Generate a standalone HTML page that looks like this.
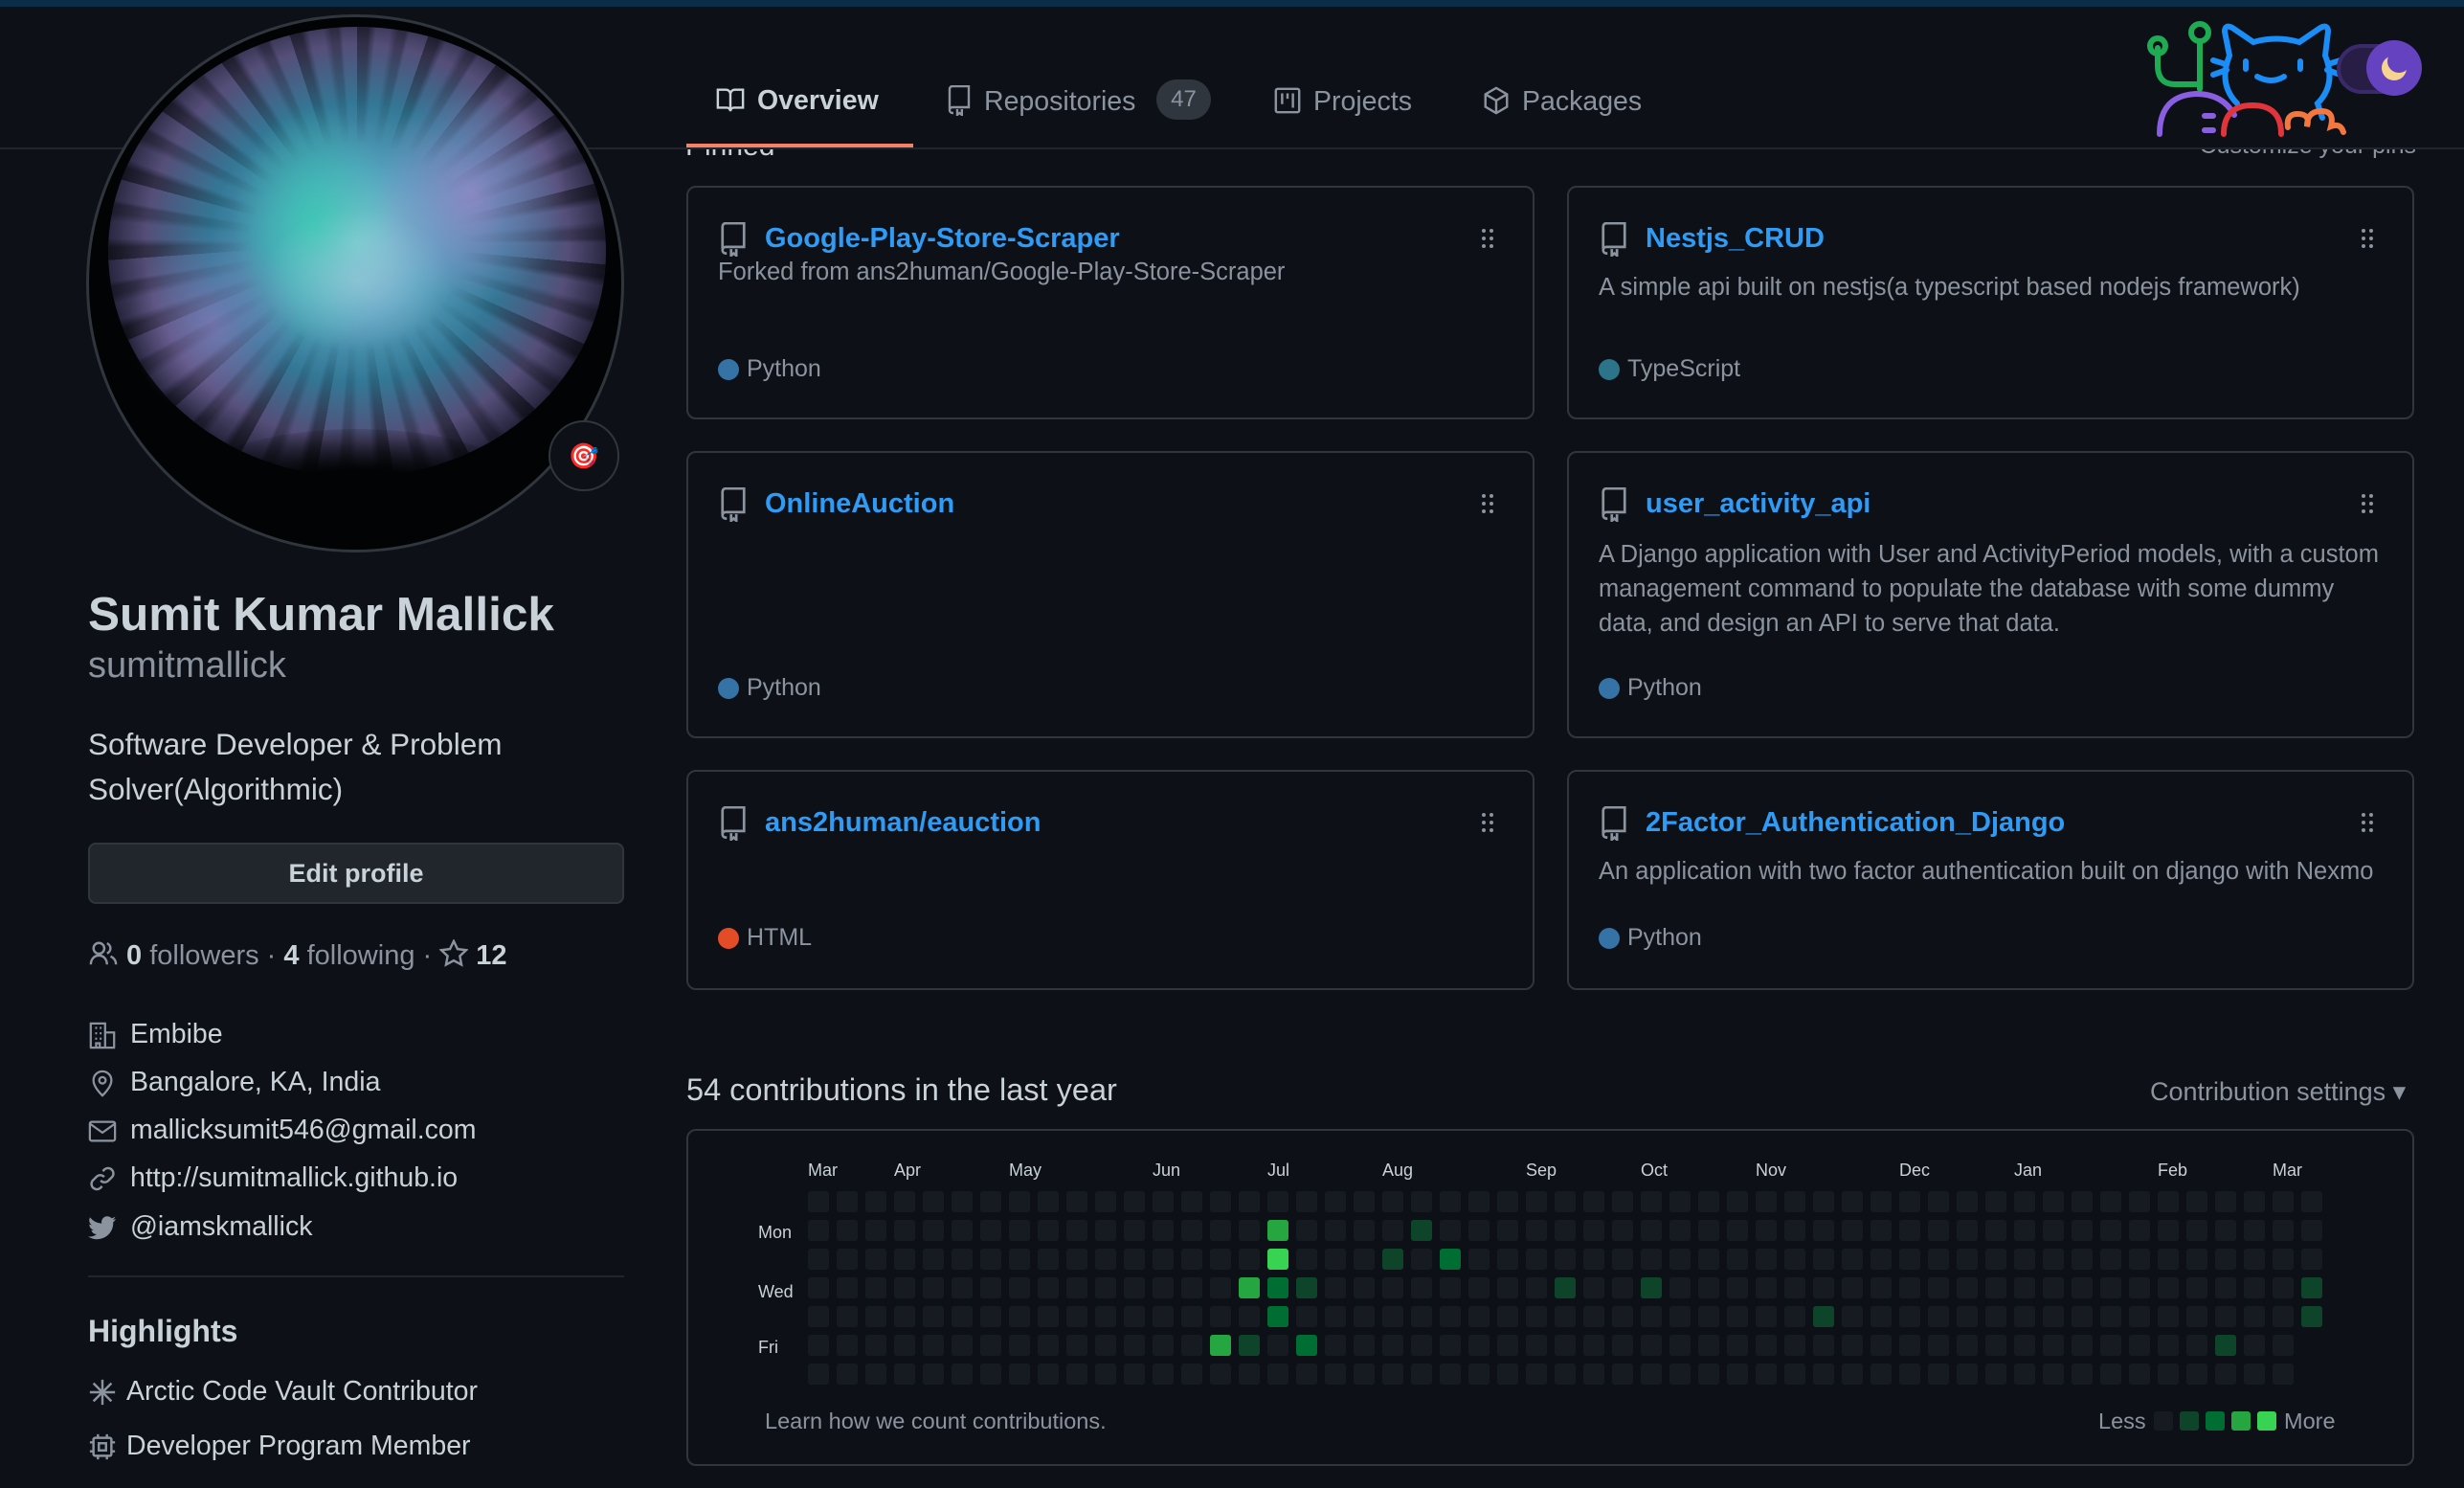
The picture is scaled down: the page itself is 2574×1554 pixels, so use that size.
<!DOCTYPE html>
<html><head><meta charset="utf-8"><style>
*{margin:0;padding:0;box-sizing:border-box}
body{width:2574px;height:1554px;background:#0d1117;font-family:"Liberation Sans",sans-serif;color:#c9d1d9;position:relative;overflow:hidden}
.a{position:absolute;white-space:nowrap}
.card{position:absolute;border:2px solid #30363d;border-radius:10px;background:#0d1117}
.ttl{position:absolute;left:80px;top:37px;font-size:29px;font-weight:bold;color:#2f9bf5}
.ric{position:absolute;left:34px;top:36px}
.dots{position:absolute;right:40px;top:42px}
.desc{position:absolute;left:31px;font-size:25.5px;color:#8b949e;line-height:36px}
.lang{position:absolute;left:31px;font-size:25px;color:#8b949e}
.lang i{display:inline-block;width:22px;height:22px;border-radius:50%;vertical-align:-4px;margin-right:8px}
.tab{position:absolute;top:89px;font-size:28.5px;color:#c9d1d9}
.li{position:absolute;left:92px;font-size:28.5px;color:#c9d1d9}
.li svg{position:absolute;left:0;top:2px}
.li span{position:absolute;left:44px;white-space:nowrap}
.ml{position:absolute;top:1212px;font-size:18px;color:#c9d1d9}
</style></head><body>
<div class="a" style="left:0;top:0;width:2574px;height:7px;background:#0c2d4a"></div>
<div class="a" style="left:0;top:154px;width:2574px;height:2px;background:#21262d"></div>

<div class="a" style="left:716px;top:156px;width:400px;height:16px;overflow:hidden"><div style="position:absolute;top:-20px;font-size:30px;color:#c9d1d9">Pinned</div></div>
<div class="a" style="left:2270px;top:156px;width:254px;height:16px;overflow:hidden"><div style="position:absolute;right:0;top:-18px;font-size:25px;color:#8b949e">Customize your pins</div></div>

<!-- avatar -->
<div class="a" style="left:90px;top:15px;width:562px;height:562px;border-radius:50%;border:3px solid #30363d;overflow:hidden;background:#020304">
<div style="position:absolute;left:20px;top:10px;width:520px;height:470px;border-radius:50%;background:radial-gradient(ellipse at 50% 48%,rgba(140,200,215,1) 0%,rgba(90,170,200,0.95) 22%,rgba(60,140,175,0.85) 42%,rgba(120,110,170,0.7) 60%,rgba(60,60,110,0.35) 75%,rgba(0,0,0,0) 88%)"></div>
<div style="position:absolute;left:20px;top:10px;width:520px;height:470px;border-radius:50%;background:repeating-conic-gradient(from 0deg at 50% 48%,rgba(2,3,4,0.55) 0deg 3deg,rgba(0,0,0,0) 5deg 9deg,rgba(2,3,4,0.35) 11deg 13deg,rgba(0,0,0,0) 14deg 19deg);-webkit-mask:radial-gradient(ellipse at 50% 48%,rgba(0,0,0,0) 30%,#000 70%);mask:radial-gradient(ellipse at 50% 48%,rgba(0,0,0,0) 30%,#000 70%)"></div>
<div style="position:absolute;left:150px;top:90px;width:170px;height:260px;border-radius:50%;background:radial-gradient(ellipse,rgba(40,210,170,0.65),rgba(0,0,0,0) 70%)"></div>
<div style="position:absolute;left:300px;top:70px;width:200px;height:230px;border-radius:50%;background:radial-gradient(ellipse,rgba(170,140,210,0.7),rgba(0,0,0,0) 70%)"></div>
<div style="position:absolute;left:40px;top:220px;width:180px;height:200px;border-radius:50%;background:radial-gradient(ellipse,rgba(150,130,200,0.6),rgba(0,0,0,0) 70%)"></div>
<div style="position:absolute;left:180px;top:200px;width:200px;height:150px;border-radius:50%;background:radial-gradient(ellipse,rgba(170,200,225,0.55),rgba(0,0,0,0) 70%)"></div>
<div style="position:absolute;left:60px;top:430px;width:440px;height:200px;border-radius:50%;background:radial-gradient(ellipse,#020304 40%,rgba(2,3,4,0) 75%)"></div>
</div>
<div class="a" style="left:573px;top:439px;width:74px;height:74px;border-radius:50%;background:#0d1117;border:2px solid #30363d;text-align:center;line-height:70px;font-size:26px">🎯</div>

<div class="a" style="left:92px;top:613px;font-size:49.5px;font-weight:bold;color:#c9d1d9">Sumit Kumar Mallick</div>
<div class="a" style="left:92px;top:674px;font-size:38px;color:#8b949e">sumitmallick</div>
<div class="a" style="left:92px;top:754px;font-size:31.5px;color:#c9d1d9;line-height:47px;white-space:normal;width:560px">Software Developer &amp; Problem Solver(Algorithmic)</div>
<div class="a" style="left:92px;top:880px;width:560px;height:64px;border:2px solid #30363d;border-radius:8px;background:#21262d;text-align:center;line-height:60px;font-size:27px;font-weight:bold;color:#c9d1d9">Edit profile</div>

<div class="a" style="left:92px;top:981px;font-size:29px;color:#8b949e">
<svg width="32" height="30" viewBox="0 0 16 16" style="vertical-align:-4px;margin-right:8px" fill="none" stroke="#8b949e" stroke-width="1.3"><circle cx="5.5" cy="5" r="3"/><path d="M1 14c0-3 2-5 4.5-5S10 11 10 14"/><path d="M10 2.2a3 3 0 010 5.6M12 9.5c1.8.8 3 2.3 3 4.5"/></svg><b style="color:#c9d1d9">0</b> followers · <b style="color:#c9d1d9">4</b> following · <svg width="30" height="30" viewBox="0 0 16 16" style="vertical-align:-4px" fill="none" stroke="#8b949e" stroke-width="1.3"><path d="M8 1l2.1 4.4 4.8.6-3.5 3.3.9 4.8L8 11.8 3.7 14.1l.9-4.8L1.1 6l4.8-.6z"/></svg> <b style="color:#c9d1d9">12</b></div>

<div class="li" style="top:1064px"><svg width="30" height="30" viewBox="0 0 16 16" fill="none" stroke="#8b949e" stroke-width="1.2"><path d="M1.5 15V1.5h8V15M9.5 6.5h5V15M1 15h14"/><path d="M4 4h1M6.5 4h1M4 7h1M6.5 7h1M4 10h1M6.5 10h1M4.5 15v-2.5h2V15"/></svg><span>Embibe</span></div>
<div class="li" style="top:1114px"><svg width="30" height="30" viewBox="0 0 16 16" fill="none" stroke="#8b949e" stroke-width="1.2"><path d="M8 15s-5-4.5-5-8.5a5 5 0 0110 0C13 10.5 8 15 8 15z"/><circle cx="8" cy="6.5" r="1.8"/></svg><span>Bangalore, KA, India</span></div>
<div class="li" style="top:1164px"><svg width="30" height="30" viewBox="0 0 16 16" fill="none" stroke="#8b949e" stroke-width="1.2"><rect x="1" y="3" width="14" height="10.5" rx="1"/><path d="M1 4l7 5 7-5"/></svg><span>mallicksumit546@gmail.com</span></div>
<div class="li" style="top:1214px"><svg width="30" height="30" viewBox="0 0 16 16" fill="none" stroke="#8b949e" stroke-width="1.3"><path d="M7 9a3 3 0 004.2.2l2.3-2.3a3 3 0 00-4.2-4.2L8.2 3.8M9 7a3 3 0 00-4.2-.2L2.5 9.1a3 3 0 004.2 4.2l1.1-1.1"/></svg><span>http://sumitmallick.github.io</span></div>
<div class="li" style="top:1265px"><svg width="30" height="30" viewBox="0 0 16 16" fill="#8b949e"><path d="M15.5 3.2c-.6.3-1.2.4-1.8.5.7-.4 1.2-1 1.4-1.7-.6.4-1.3.6-2 .8a3.2 3.2 0 00-5.5 2.9A9 9 0 011.1 2.3a3.2 3.2 0 001 4.3c-.5 0-1-.2-1.4-.4 0 1.6 1.1 2.9 2.6 3.2-.5.1-1 .2-1.5.1.4 1.3 1.6 2.2 3 2.2A6.4 6.4 0 010 13a9 9 0 0014-7.6v-.4c.6-.5 1.1-1 1.5-1.8z"/></svg><span>@iamskmallick</span></div>

<div class="a" style="left:92px;top:1332px;width:560px;height:2px;background:#21262d"></div>
<div class="a" style="left:92px;top:1372px;font-size:32px;font-weight:bold;color:#c9d1d9">Highlights</div>
<div class="li" style="top:1437px"><svg width="30" height="30" viewBox="0 0 16 16" fill="none" stroke="#8b949e" stroke-width="1.3"><path d="M8 1v14M1 8h14M3 3l10 10M13 3L3 13"/></svg><span style="left:40px">Arctic Code Vault Contributor</span></div>
<div class="li" style="top:1494px"><svg width="30" height="30" viewBox="0 0 16 16" fill="none" stroke="#8b949e" stroke-width="1.3"><rect x="3" y="3" width="10" height="10" rx="1"/><rect x="6" y="6" width="4" height="4"/><path d="M5.5 1v2M10.5 1v2M5.5 13v2M10.5 13v2M1 5.5h2M1 10.5h2M13 5.5h2M13 10.5h2"/></svg><span style="left:40px">Developer Program Member</span></div>

<!-- tabs -->
<div class="tab" style="left:747px;font-weight:bold"><svg width="32" height="30" viewBox="0 0 16 16" style="vertical-align:-5px;margin-right:12px" fill="none" stroke="#c9d1d9" stroke-width="1.3"><path d="M1 2.5h4.5A2.5 2.5 0 018 5v9.5a2 2 0 00-2-2H1zM15 2.5h-4.5A2.5 2.5 0 008 5v9.5a2 2 0 012-2h5z"/></svg>Overview</div>
<div class="a" style="left:717px;top:150px;width:237px;height:4px;background:#f78166"></div>
<div class="tab" style="left:988px;color:#8b949e"><svg width="28" height="32" viewBox="2.5 0.5 11 16" style="vertical-align:-6px;margin-right:12px" fill="none" stroke="#8b949e" stroke-width="1.2"><path d="M3 13V2.5A1.5 1.5 0 014.5 1H13v11H4.5A1.5 1.5 0 003 13.5 1.5 1.5 0 004.5 15H5M7 13v3l1.2-1 1.2 1v-3"/></svg>Repositories</div>
<div class="a" style="left:1208px;top:83px;width:57px;height:42px;border-radius:21px;background:#30363d;color:#8b949e;font-size:24px;text-align:center;line-height:42px">47</div>
<div class="tab" style="left:1330px;color:#8b949e"><svg width="30" height="32" viewBox="0 0 16 16" style="vertical-align:-6px;margin-right:12px" fill="none" stroke="#8b949e" stroke-width="1.3"><rect x="1.5" y="1.5" width="13" height="13" rx="1"/><path d="M5 4v6M8 4v3M11 4v8"/></svg>Projects</div>
<div class="tab" style="left:1548px;color:#8b949e"><svg width="30" height="32" viewBox="0 0 16 16" style="vertical-align:-6px;margin-right:12px" fill="none" stroke="#8b949e" stroke-width="1.3"><path d="M8 1l6 3.5v7L8 15l-6-3.5v-7zM2 4.5L8 8l6-3.5M8 8v7"/></svg>Packages</div>

<!-- logo -->
<svg class="a" style="left:2240px;top:20px" width="230" height="130" viewBox="0 0 230 130" fill="none" stroke-linecap="round" stroke-width="6">
<g stroke="#1fab54"><circle cx="58" cy="14" r="9"/><path d="M58 23v50M14 30v18q0 20 18 20h26"/><circle cx="14" cy="28" r="8"/></g>
<g stroke="#1b8df7"><path d="M72 43l13 4M72 58l14-5M205 43l-13 4M205 58l-14-5M97 88q-20-20-8-50l-5-25q0-8 8-4l22 15q24-7 48 0l22-15q8-4 8 4l-3 25q12 30-8 50l5 15"/><path d="M106 44v8M163 44v8M118 60q15 8 28 0"/></g>
<g stroke="#8a5ee0"><path d="M16 120q0-40 38-42 28 0 40 22"/><path d="M63 101h9M63 116h9"/></g>
<path stroke="#e1343b" d="M83 120q0-30 30-30t30 30"/>
<path stroke="#f4773f" d="M150 113q-2-14 10-14q14 0 10 13q0-16 15-16q14 0 10 16q10-4 13 6"/>
</svg>
<div class="a" style="left:2441px;top:46px;width:87px;height:52px;border-radius:26px;background:#271d45;border:4px solid #3b2a6b"></div>
<div class="a" style="left:2472px;top:42px;width:58px;height:58px;border-radius:50%;background:#6542c0"></div>
<div class="a" style="left:2488px;top:58px;width:26px;height:26px;border-radius:50%;background:#f6d38e"></div>
<div class="a" style="left:2494px;top:52px;width:24px;height:24px;border-radius:50%;background:#6542c0"></div>

<!-- cards -->
<div class="card" style="left:717px;top:194px;width:886px;height:244px">
<svg class="ric" width="26" height="36" viewBox="2.5 0.5 11 16" fill="none" stroke="#8b949e" stroke-width="1.2"><path d="M3 13V2.5A1.5 1.5 0 014.5 1H13v11H4.5A1.5 1.5 0 003 13.5 1.5 1.5 0 004.5 15H5M7 13v3l1.2-1 1.2 1v-3"/></svg>
<div class="ttl">Google-Play-Store-Scraper</div><svg class="dots" width="14" height="22" viewBox="0 0 14 22" fill="#8b949e"><circle cx="3" cy="3" r="2"/><circle cx="11" cy="3" r="2"/><circle cx="3" cy="11" r="2"/><circle cx="11" cy="11" r="2"/><circle cx="3" cy="19" r="2"/><circle cx="11" cy="19" r="2"/></svg>
<div class="desc" style="top:70px">Forked from ans2human/Google-Play-Store-Scraper</div>
<div class="lang" style="top:175px"><i style="background:#3572a5"></i>Python</div></div>

<div class="card" style="left:1637px;top:194px;width:885px;height:244px">
<svg class="ric" width="26" height="36" viewBox="2.5 0.5 11 16" fill="none" stroke="#8b949e" stroke-width="1.2"><path d="M3 13V2.5A1.5 1.5 0 014.5 1H13v11H4.5A1.5 1.5 0 003 13.5 1.5 1.5 0 004.5 15H5M7 13v3l1.2-1 1.2 1v-3"/></svg>
<div class="ttl">Nestjs_CRUD</div><svg class="dots" width="14" height="22" viewBox="0 0 14 22" fill="#8b949e"><circle cx="3" cy="3" r="2"/><circle cx="11" cy="3" r="2"/><circle cx="3" cy="11" r="2"/><circle cx="11" cy="11" r="2"/><circle cx="3" cy="19" r="2"/><circle cx="11" cy="19" r="2"/></svg>
<div class="desc" style="top:86px">A simple api built on nestjs(a typescript based nodejs framework)</div>
<div class="lang" style="top:175px"><i style="background:#2b7489"></i>TypeScript</div></div>

<div class="card" style="left:717px;top:471px;width:886px;height:300px">
<svg class="ric" width="26" height="36" viewBox="2.5 0.5 11 16" fill="none" stroke="#8b949e" stroke-width="1.2"><path d="M3 13V2.5A1.5 1.5 0 014.5 1H13v11H4.5A1.5 1.5 0 003 13.5 1.5 1.5 0 004.5 15H5M7 13v3l1.2-1 1.2 1v-3"/></svg>
<div class="ttl">OnlineAuction</div><svg class="dots" width="14" height="22" viewBox="0 0 14 22" fill="#8b949e"><circle cx="3" cy="3" r="2"/><circle cx="11" cy="3" r="2"/><circle cx="3" cy="11" r="2"/><circle cx="11" cy="11" r="2"/><circle cx="3" cy="19" r="2"/><circle cx="11" cy="19" r="2"/></svg>
<div class="lang" style="top:231px"><i style="background:#3572a5"></i>Python</div></div>

<div class="card" style="left:1637px;top:471px;width:885px;height:300px">
<svg class="ric" width="26" height="36" viewBox="2.5 0.5 11 16" fill="none" stroke="#8b949e" stroke-width="1.2"><path d="M3 13V2.5A1.5 1.5 0 014.5 1H13v11H4.5A1.5 1.5 0 003 13.5 1.5 1.5 0 004.5 15H5M7 13v3l1.2-1 1.2 1v-3"/></svg>
<div class="ttl">user_activity_api</div><svg class="dots" width="14" height="22" viewBox="0 0 14 22" fill="#8b949e"><circle cx="3" cy="3" r="2"/><circle cx="11" cy="3" r="2"/><circle cx="3" cy="11" r="2"/><circle cx="11" cy="11" r="2"/><circle cx="3" cy="19" r="2"/><circle cx="11" cy="19" r="2"/></svg>
<div class="desc" style="top:88px;white-space:normal;width:830px">A Django application with User and ActivityPeriod models, with a custom management command to populate the database with some dummy data, and design an API to serve that data.</div>
<div class="lang" style="top:231px"><i style="background:#3572a5"></i>Python</div></div>

<div class="card" style="left:717px;top:804px;width:886px;height:230px">
<svg class="ric" width="26" height="36" viewBox="2.5 0.5 11 16" fill="none" stroke="#8b949e" stroke-width="1.2"><path d="M3 13V2.5A1.5 1.5 0 014.5 1H13v11H4.5A1.5 1.5 0 003 13.5 1.5 1.5 0 004.5 15H5M7 13v3l1.2-1 1.2 1v-3"/></svg>
<div class="ttl">ans2human/eauction</div><svg class="dots" width="14" height="22" viewBox="0 0 14 22" fill="#8b949e"><circle cx="3" cy="3" r="2"/><circle cx="11" cy="3" r="2"/><circle cx="3" cy="11" r="2"/><circle cx="11" cy="11" r="2"/><circle cx="3" cy="19" r="2"/><circle cx="11" cy="19" r="2"/></svg>
<div class="lang" style="top:159px"><i style="background:#e34c26"></i>HTML</div></div>

<div class="card" style="left:1637px;top:804px;width:885px;height:230px">
<svg class="ric" width="26" height="36" viewBox="2.5 0.5 11 16" fill="none" stroke="#8b949e" stroke-width="1.2"><path d="M3 13V2.5A1.5 1.5 0 014.5 1H13v11H4.5A1.5 1.5 0 003 13.5 1.5 1.5 0 004.5 15H5M7 13v3l1.2-1 1.2 1v-3"/></svg>
<div class="ttl">2Factor_Authentication_Django</div><svg class="dots" width="14" height="22" viewBox="0 0 14 22" fill="#8b949e"><circle cx="3" cy="3" r="2"/><circle cx="11" cy="3" r="2"/><circle cx="3" cy="11" r="2"/><circle cx="11" cy="11" r="2"/><circle cx="3" cy="19" r="2"/><circle cx="11" cy="19" r="2"/></svg>
<div class="desc" style="top:86px">An application with two factor authentication built on django with Nexmo</div>
<div class="lang" style="top:159px"><i style="background:#3572a5"></i>Python</div></div>

<!-- contributions -->
<div class="a" style="left:717px;top:1120px;font-size:32.5px;color:#c9d1d9">54 contributions in the last year</div>
<div class="a" style="left:2246px;top:1125px;font-size:27px;color:#8b949e">Contribution settings ▾</div>
<div class="a" style="left:717px;top:1179px;width:1805px;height:352px;border:2px solid #30363d;border-radius:10px"></div>

<div class="ml" style="left:844px">Mar</div><div class="ml" style="left:934px">Apr</div><div class="ml" style="left:1054px">May</div><div class="ml" style="left:1204px">Jun</div><div class="ml" style="left:1324px">Jul</div><div class="ml" style="left:1444px">Aug</div><div class="ml" style="left:1594px">Sep</div><div class="ml" style="left:1714px">Oct</div><div class="ml" style="left:1834px">Nov</div><div class="ml" style="left:1984px">Dec</div><div class="ml" style="left:2104px">Jan</div><div class="ml" style="left:2254px">Feb</div><div class="ml" style="left:2374px">Mar</div>
<div class="a" style="left:792px;top:1277px;font-size:18px">Mon</div>
<div class="a" style="left:792px;top:1339px;font-size:18px">Wed</div>
<div class="a" style="left:792px;top:1397px;font-size:18px">Fri</div>

<svg class="a" style="left:0;top:0" width="2574" height="1554" id="g"></svg>
<script>
var g=document.getElementById('g'),s='';
var c=['#161b22','#0e4429','#006d32','#26a641','#39d353'];
var hi={'16,1':3,'21,1':1,'16,2':4,'20,2':1,'22,2':2,'15,3':3,'16,3':2,'17,3':1,'26,3':1,'29,3':1,'52,3':1,'16,4':2,'35,4':1,'52,4':1,'14,5':3,'15,5':1,'17,5':2,'49,5':1};
for(var x=0;x<53;x++)for(var y=0;y<7;y++){if(x==52&&y>4)continue;var l=hi[x+','+y]||0;
s+='<rect x="'+(844+x*30)+'" y="'+(1244+y*30)+'" width="22" height="22" rx="3" fill="'+c[l]+'"/>';}
for(var i=0;i<5;i++)s+='<rect x="'+(2250+i*27)+'" y="1474" width="20" height="20" rx="3" fill="'+c[i]+'"/>';
g.innerHTML=s;
</script>
<div class="a" style="left:799px;top:1471px;font-size:23.5px;color:#8b949e">Learn how we count contributions.</div>
<div class="a" style="left:2192px;top:1471px;font-size:23.5px;color:#8b949e">Less</div>
<div class="a" style="left:2386px;top:1471px;font-size:23.5px;color:#8b949e">More</div>
</body></html>
